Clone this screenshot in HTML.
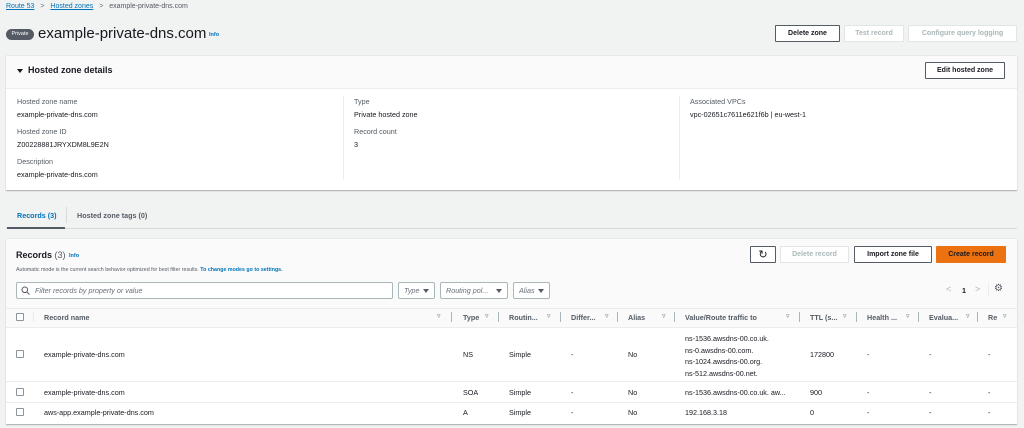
<!DOCTYPE html>
<html><head><meta charset="utf-8"><style>
*{box-sizing:border-box;margin:0;padding:0}
body{width:1024px;height:428px;background:#f1f2f2;font-family:"Liberation Sans",sans-serif;color:#16191f;font-size:7.2px;position:relative;overflow:hidden}
.a{position:absolute;white-space:nowrap}
.lnk{color:#0073bb;text-decoration:underline}
.btn{position:absolute;height:17px;border:1px solid #545b64;background:#fff;font-weight:bold;font-size:7px;display:flex;align-items:center;justify-content:center;border-radius:1px}
.dis{border-color:#e2e5e5;color:#aab7b8}
.panel{position:absolute;background:#fff;box-shadow:0 1px 1px rgba(0,0,0,.3);border-top:1px solid #e8eaea}
.lbl{color:#545b64}
.sel{position:absolute;top:282px;height:17px;border:1px solid #aab7b8;background:#fff;font-style:italic;color:#687078;padding-left:5px;line-height:15px;border-radius:2px}
.sel:after{content:"";position:absolute;right:5px;top:6px;border:3px solid transparent;border-top:4px solid #545b64}
.cb{position:absolute;width:8px;height:8px;border:1px solid #8d959c;border-radius:1px;background:#fff}
.tri{position:absolute;font-size:7px;color:#687078}
.vd{position:absolute;width:1px;height:10px;background:#aab7b8;top:312px}
.hl{position:absolute;left:6px;width:1011px;height:1px;background:#eaeded}
</style></head><body>
<div class="a" style="left:6px;top:3px;font-size:7px"><span class="lnk">Route 53</span> <span style="color:#687078;margin:0 4px">&gt;</span> <span class="lnk">Hosted zones</span> <span style="color:#687078;margin:0 4px">&gt;</span> <span style="color:#545b64">example-private-dns.com</span></div>
<div class="a" style="left:6px;top:29px;width:28px;height:11px;background:#545b64;border-radius:6px;color:#fff;font-size:5.5px;text-align:center;line-height:11px">Private</div>
<div class="a" style="left:38px;top:25px;font-size:15px">example-private-dns.com</div>
<div class="a" style="left:209px;top:32px;font-size:5.5px;color:#0073bb;font-weight:bold">Info</div>
<div class="btn" style="left:775px;top:25px;width:65px">Delete zone</div>
<div class="btn dis" style="left:844px;top:25px;width:60px">Test record</div>
<div class="btn dis" style="left:908px;top:25px;width:109px">Configure query logging</div>

<div class="panel" style="left:6px;top:55px;width:1011px;height:135px">
<div style="height:33px;background:#fafafa;border-bottom:1px solid #eaeded"></div>
</div>
<div class="a" style="left:17px;top:69px;border:3px solid transparent;border-top:4px solid #16191f"></div>
<div class="a" style="left:28px;top:65px;font-size:9px;font-weight:bold">Hosted zone details</div>
<div class="btn" style="left:925px;top:62px;width:80px">Edit hosted zone</div>
<div class="a" style="left:343px;top:96px;width:1px;height:84px;background:#eaeded"></div>
<div class="a" style="left:679px;top:96px;width:1px;height:84px;background:#eaeded"></div>
<div class="a lbl" style="left:17px;top:97px">Hosted zone name</div>
<div class="a" style="left:17px;top:110px">example-private-dns.com</div>
<div class="a lbl" style="left:17px;top:127px">Hosted zone ID</div>
<div class="a" style="left:17px;top:140px">Z00228881JRYXDM8L9E2N</div>
<div class="a lbl" style="left:17px;top:157px">Description</div>
<div class="a" style="left:17px;top:170px">example-private-dns.com</div>
<div class="a lbl" style="left:354px;top:97px">Type</div>
<div class="a" style="left:354px;top:110px">Private hosted zone</div>
<div class="a lbl" style="left:354px;top:127px">Record count</div>
<div class="a" style="left:354px;top:140px">3</div>
<div class="a lbl" style="left:690px;top:97px">Associated VPCs</div>
<div class="a" style="left:690px;top:110px">vpc-02651c7611e621f6b | eu-west-1</div>

<div class="a" style="left:17px;top:211px;font-weight:bold;color:#0073bb">Records (3)</div>
<div class="a" style="left:66px;top:207px;width:1px;height:16px;background:#d5dbdb"></div>
<div class="a" style="left:77px;top:211px;font-weight:bold;color:#545b64">Hosted zone tags (0)</div>
<div class="a" style="left:6px;top:228px;width:1011px;height:1px;background:#d5dbdb"></div>
<div class="a" style="left:7px;top:227px;width:58px;height:2px;background:#545b64"></div>

<div class="panel" style="left:6px;top:238px;width:1011px;height:186px">
<div style="height:69px;background:#fafafa"></div>
<div style="height:20px;background:#fafafa;border-top:1px solid #eaeded;border-bottom:1px solid #eaeded"></div>
</div>
<div class="a" style="left:16px;top:250px;font-size:9px;font-weight:bold">Records <span style="font-weight:normal;color:#545b64">(3)</span></div>
<div class="a" style="left:69px;top:253px;font-size:5.5px;font-weight:bold;color:#0073bb">Info</div>
<div class="a" style="left:16px;top:267px;font-size:5.3px;color:#545b64">Automatic mode is the current search behavior optimized for best filter results. <span style="color:#0073bb;font-weight:bold">To change modes go to settings.</span></div>
<div class="btn" style="left:750px;top:246px;width:26px;font-size:11px;font-weight:normal">↻</div>
<div class="btn dis" style="left:780px;top:246px;width:69px">Delete record</div>
<div class="btn" style="left:854px;top:246px;width:78px">Import zone file</div>
<div class="btn" style="left:936px;top:246px;width:70px;background:#ec7211;border-color:#ec7211;color:#16191f">Create record</div>
<div class="a" style="left:16px;top:282px;width:377px;height:17px;border:1px solid #aab7b8;background:#fff;border-radius:2px;font-style:italic;color:#687078;padding-left:18px;line-height:15px">Filter records by property or value</div>
<svg class="a" style="left:21px;top:286px" width="9" height="9" viewBox="0 0 9 9"><circle cx="3.8" cy="3.8" r="2.8" fill="none" stroke="#545b64" stroke-width="1"/><path d="M6 6L8.5 8.5" stroke="#545b64"/></svg>
<div class="sel" style="left:398px;width:37px">Type</div>
<div class="sel" style="left:440px;width:68px">Routing pol...</div>
<div class="sel" style="left:513px;width:37px">Alias</div>
<div class="a" style="left:946px;top:284px;color:#aab7b8;font-size:9px">&lt;</div>
<div class="a" style="left:962px;top:286px;font-weight:bold">1</div>
<div class="a" style="left:975px;top:284px;color:#aab7b8;font-size:9px">&gt;</div>
<div class="a" style="left:988px;top:283px;width:1px;height:14px;background:#eaeded"></div>
<div class="a" style="left:994px;top:283px;font-size:10px;color:#545b64">⚙</div>

<div class="cb" style="left:16px;top:313px"></div>
<div class="a" style="left:33px;top:312px;width:1px;height:10px;background:#eaeded"></div>
<div style="font-weight:bold;color:#545b64">
<div class="a" style="left:44px;top:313px">Record name</div>
<div class="a" style="left:463px;top:313px">Type</div>
<div class="a" style="left:509px;top:313px">Routin...</div>
<div class="a" style="left:571px;top:313px">Differ...</div>
<div class="a" style="left:628px;top:313px">Alias</div>
<div class="a" style="left:685px;top:313px">Value/Route traffic to</div>
<div class="a" style="left:810px;top:313px">TTL (s...</div>
<div class="a" style="left:867px;top:313px">Health ...</div>
<div class="a" style="left:929px;top:313px">Evalua...</div>
<div class="a" style="left:988px;top:313px">Re</div>
</div>
<div class="tri" style="left:437px;top:312px">▿</div><div class="vd" style="left:451px"></div>
<div class="tri" style="left:485px;top:312px">▿</div><div class="vd" style="left:498px"></div>
<div class="tri" style="left:547px;top:312px">▿</div><div class="vd" style="left:560px"></div>
<div class="tri" style="left:605px;top:312px">▿</div><div class="vd" style="left:617px"></div>
<div class="tri" style="left:662px;top:312px">▿</div><div class="vd" style="left:674px"></div>
<div class="tri" style="left:786px;top:312px">▿</div><div class="vd" style="left:799px"></div>
<div class="tri" style="left:843px;top:312px">▿</div><div class="vd" style="left:856px"></div>
<div class="tri" style="left:906px;top:312px">▿</div><div class="vd" style="left:918px"></div>
<div class="tri" style="left:966px;top:312px">▿</div><div class="vd" style="left:977px"></div>
<div class="tri" style="left:1003px;top:312px">▿</div>

<div class="hl" style="top:381px"></div>
<div class="hl" style="top:402px"></div>

<div class="cb" style="left:16px;top:350px"></div>
<div class="a" style="left:44px;top:350px">example-private-dns.com</div>
<div class="a" style="left:463px;top:350px">NS</div>
<div class="a" style="left:509px;top:350px">Simple</div>
<div class="a" style="left:571px;top:350px">-</div>
<div class="a" style="left:628px;top:350px">No</div>
<div class="a" style="left:685px;top:333px;line-height:11.5px">ns-1536.awsdns-00.co.uk.<br>ns-0.awsdns-00.com.<br>ns-1024.awsdns-00.org.<br>ns-512.awsdns-00.net.</div>
<div class="a" style="left:810px;top:350px">172800</div>
<div class="a" style="left:867px;top:350px">-</div>
<div class="a" style="left:929px;top:350px">-</div>
<div class="a" style="left:988px;top:350px">-</div>

<div class="cb" style="left:16px;top:388px"></div>
<div class="a" style="left:44px;top:388px">example-private-dns.com</div>
<div class="a" style="left:463px;top:388px">SOA</div>
<div class="a" style="left:509px;top:388px">Simple</div>
<div class="a" style="left:571px;top:388px">-</div>
<div class="a" style="left:628px;top:388px">No</div>
<div class="a" style="left:685px;top:388px">ns-1536.awsdns-00.co.uk. aw...</div>
<div class="a" style="left:810px;top:388px">900</div>
<div class="a" style="left:867px;top:388px">-</div>
<div class="a" style="left:929px;top:388px">-</div>
<div class="a" style="left:988px;top:388px">-</div>

<div class="cb" style="left:16px;top:408px"></div>
<div class="a" style="left:44px;top:408px">aws-app.example-private-dns.com</div>
<div class="a" style="left:463px;top:408px">A</div>
<div class="a" style="left:509px;top:408px">Simple</div>
<div class="a" style="left:571px;top:408px">-</div>
<div class="a" style="left:628px;top:408px">No</div>
<div class="a" style="left:685px;top:408px">192.168.3.18</div>
<div class="a" style="left:810px;top:408px">0</div>
<div class="a" style="left:867px;top:408px">-</div>
<div class="a" style="left:929px;top:408px">-</div>
<div class="a" style="left:988px;top:408px">-</div>
</body></html>
